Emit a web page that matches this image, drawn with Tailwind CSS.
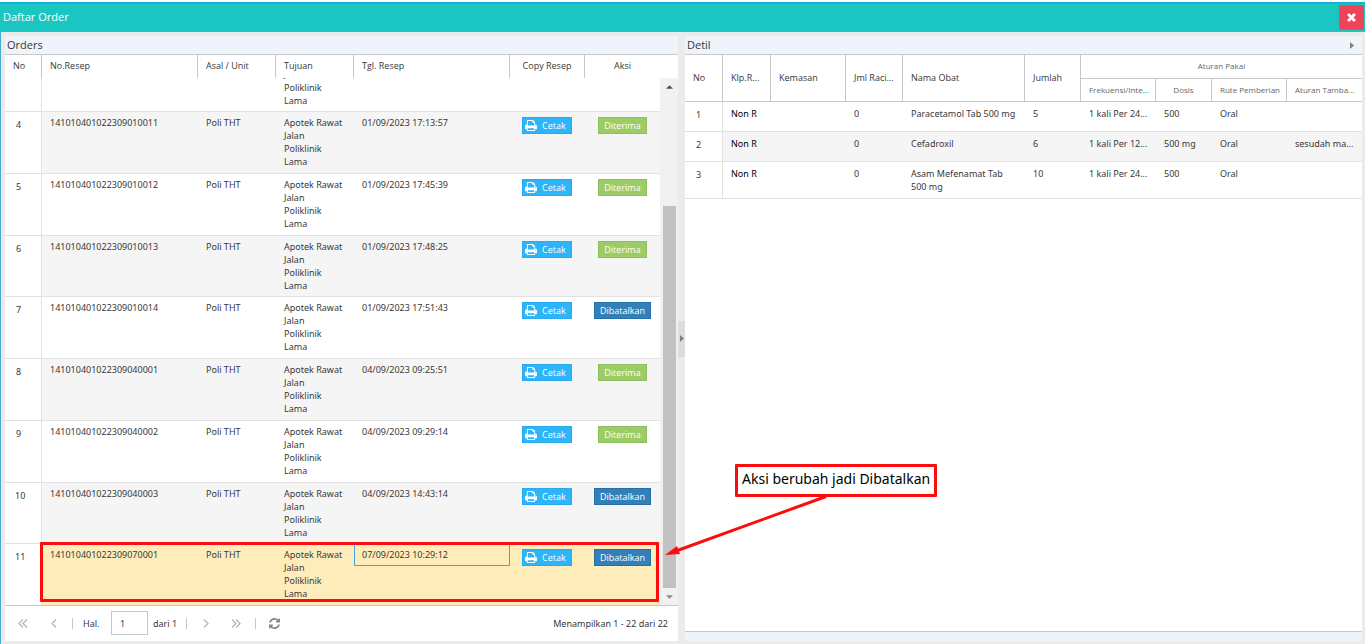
<!DOCTYPE html>
<html lang="id">
<head>
<meta charset="utf-8">
<title>Daftar Order</title>
<script src="https://cdn.jsdelivr.net/npm/@tailwindcss/browser@4"></script>
</head>
<body class="relative flex h-screen flex-col overflow-hidden bg-[#ebebeb] pt-[2px] font-['Open_Sans',sans-serif] text-[9px] leading-[13px] text-[#383838] before:absolute before:inset-x-0 before:top-0 before:h-[2px] before:bg-white">
<header class="flex h-[30px] shrink-0 items-center justify-between border-t-2 border-[#14b0d8] bg-[#19c6c1] pb-[2px] pl-[3px] pr-px text-white">
  <h1 class="text-[11px] leading-4">Daftar Order</h1>
  <button aria-label="Tutup" class="flex h-[25px] w-[25px] items-center justify-center border border-[#d9535f] bg-[#ee4358]">
    <svg class="h-[9px] w-[9px]" viewBox="0 0 10 10" stroke="#fff" stroke-width="3.2"><path d="M1.2 1.2 8.8 8.8M8.8 1.2 1.2 8.8"/></svg>
  </button>
</header>
<main class="grid min-h-0 flex-1 grid-cols-[673fr_7px_677fr] border-l border-[#45aed0] pb-[3px] pl-1 pr-[3px] pt-1">
  <section class="flex min-h-0 min-w-0 flex-col bg-white">
    <h2 class="h-[19px] shrink-0 border-b border-[#c6c8cc] bg-[#eff3fa] pl-[2px] text-[11px] leading-[18px]">Orders</h2>
    <table class="w-full shrink-0 table-fixed border-separate border-spacing-0 text-left">
      <colgroup><col class="w-[37px]"><col><col class="w-[78px]"><col class="w-[78px]"><col class="w-[156px]"><col class="w-[75px]"><col class="w-[93px]"></colgroup>
      <thead><tr class="h-[23px] *:border-r *:border-[#c6c8cc] *:px-2 *:pb-[2px] *:font-normal">
        <th>No</th><th>No.Resep</th><th>Asal / Unit</th><th>Tujuan</th><th>Tgl. Resep</th><th class="text-center">Copy Resep</th><th class="border-r-0! pr-[26px]! text-center">Aksi</th>
      </tr></thead>
    </table>
    <div class="flex min-h-0 flex-1">
      <div class="relative flex min-w-0 flex-1 flex-col justify-end overflow-hidden">
        <table class="w-full shrink-0 table-fixed border-separate border-spacing-0 font-['Noto_Sans',sans-serif]">
          <colgroup><col class="w-[37px]"><col><col class="w-[78px]"><col class="w-[78px]"><col class="w-[156px]"><col class="w-[75px]"><col class="w-[75px]"></colgroup>
          <tbody id="orders"></tbody>
        </table>
        <div class="absolute bottom-[3px] left-[35px] right-px h-[60px] rounded-[1px] border-3 border-[#fb0d0d]"></div>
      </div>
      <div class="flex w-[18px] flex-col items-center bg-[#f1f1f1]">
        <div class="flex h-[18px] items-center"><svg class="h-1 w-[7px]" viewBox="0 0 8 4" fill="#505050"><path d="M0 4 4 0l4 4z"/></svg></div>
        <div class="mt-[110px] mb-0 w-[13px] flex-1 bg-[#c1c1c1]"></div>
        <div class="flex h-[17px] items-center"><svg class="h-1 w-[7px]" viewBox="0 0 8 4" fill="#8a8a8a"><path d="M0 0h8L4 4z"/></svg></div>
      </div>
    </div>
    <footer class="flex h-9 shrink-0 items-center border-t border-[#c6c8cc] pl-[13px] pr-[10px] pb-px font-['Noto_Sans',sans-serif]">
      <button aria-label="Halaman pertama" class="w-[31px]"><svg class="h-[9px] w-[10px]" viewBox="0 0 10 9" fill="none" stroke="#b4b4b4" stroke-width="1.2"><path d="M5 .5 1 4.5l4 4M9 .5 5 4.5l4 4"/></svg></button>
      <button aria-label="Halaman sebelumnya" class="w-[23px]"><svg class="h-[9px] w-[10px]" viewBox="0 0 10 9" fill="none" stroke="#b4b4b4" stroke-width="1.2"><path d="M7 .5 3 4.5l4 4"/></svg></button>
      <span class="h-[11px] w-px bg-[#c8c8c8]"></span>
      <label for="page" class="ml-[10px] w-[28px]">Hal.</label>
      <input id="page" value="1" class="h-6 w-[37px] border border-[#c8c8c8] pl-2">
      <span class="ml-[5px] w-[33px] whitespace-nowrap">dari 1</span>
      <span class="h-[11px] w-px bg-[#c8c8c8]"></span>
      <button aria-label="Halaman berikutnya" class="ml-[14px] w-[30px]"><svg class="h-[9px] w-[10px]" viewBox="0 0 10 9" fill="none" stroke="#b4b4b4" stroke-width="1.2"><path d="m3 .5 4 4-4 4"/></svg></button>
      <button aria-label="Halaman terakhir" class="w-[24px]"><svg class="h-[9px] w-[10px]" viewBox="0 0 10 9" fill="none" stroke="#b4b4b4" stroke-width="1.2"><path d="m1 .5 4 4-4 4M5 .5l4 4-4 4"/></svg></button>
      <span class="h-[11px] w-px bg-[#c8c8c8]"></span>
      <button aria-label="Muat ulang" class="ml-[13px]"><svg class="h-[11px] w-[11px]" viewBox="0 0 1536 1536" fill="#858585"><path d="M1511 928q0 5-1 7-64 268-268 434.500T764 1536q-146 0-282.500-55T238 1324l-129 129q-19 19-45 19t-45-19-19-45V960q0-26 19-45t45-19h448q26 0 45 19t19 45-19 45l-137 137q71 66 161 102t187 36q134 0 250-65t186-179q11-17 53-117 8-23 30-23h192q13 0 22.500 9.500t9.500 22.500zm25-800v448q0 26-19 45t-45 19h-448q-26 0-45-19t-19-45 19-45l138-138Q969 256 768 256q-134 0-250 65T332 500q-11 17-53 117-8 23-30 23H50q-13 0-22.500-9.500T18 608v-7q65-268 270-434.500T768 0q146 0 284 55.500T1297 212l130-129q19-19 45-19t45 19 19 45z"/></svg></button>
      <span class="ml-auto">Menampilkan 1 - 22 dari 22</span>
    </footer>
  </section>
  <div class="flex items-center">
    <button aria-label="Ciutkan panel detil" class="flex h-9 w-full items-center justify-center bg-[#dcdcdc]"><svg class="h-[7px] w-1" viewBox="0 0 4 7" fill="#808080"><path d="M0 0v7l4-3.500z"/></svg></button>
  </div>
  <section class="flex min-h-0 min-w-0 flex-col bg-white">
    <div class="flex h-[19px] shrink-0 items-center justify-between border-b border-[#c6c8cc] bg-[#eff3fa] pl-[2px] pr-2">
      <h2 class="text-[11px] leading-[18px]">Detil</h2>
      <button aria-label="Ciutkan"><svg class="h-[7px] w-1" viewBox="0 0 4 7" fill="#808080"><path d="M0 0v7l4-3.500z"/></svg></button>
    </div>
    <table class="w-full table-fixed border-separate border-spacing-0 text-left">
      <colgroup><col class="w-[38px]"><col class="w-[48px]"><col class="w-[75px]"><col class="w-[57px]"><col><col class="w-[56px]"><col class="w-[75px]"><col class="w-[56px]"><col class="w-[75px]"><col class="w-[75px]"></colgroup>
      <thead class="*:*:border-r *:*:border-b *:*:border-[#c6c8cc] *:*:px-2 *:*:pb-[2px] *:*:font-normal *:*:whitespace-nowrap">
        <tr class="h-[24px]"><th rowspan="2">No</th><th rowspan="2">Klp.R...</th><th rowspan="2">Kemasan</th><th rowspan="2">Jml Raci...</th><th rowspan="2">Nama Obat</th><th rowspan="2">Jumlah</th><th colspan="4" class="border-r-0! text-center text-[8px] text-[#666]">Aturan Pakai</th></tr>
        <tr class="h-[23px] text-[8px] text-[#666]"><th>Frekuensi/Inte...</th><th class="text-center">Dosis</th><th class="text-center">Rute Pemberian</th><th class="border-r-0!">Aturan Tamba...</th></tr>
      </thead>
      <tbody id="detail" class="font-['Noto_Sans',sans-serif]"></tbody>
    </table>
    <div class="mt-auto h-[10px] shrink-0 border-t border-[#c6c8cc] bg-[#eff3fa]"></div>
  </section>
</main>
<div class="absolute left-[735px] top-[464px] rounded-[1px] border-3 border-[#fb0d0d] bg-white px-1 pb-[5px] pt-[2px] font-['Noto_Sans',sans-serif] text-[14px] leading-5 text-black">Aksi berubah jadi Dibatalkan</div>
<svg class="pointer-events-none absolute left-[660px] top-[490px] h-[70px] w-[170px]" viewBox="0 0 170 70"><path d="M166 6.500 16 61" stroke="#fb0d0d" stroke-width="3"/><path d="m5 65 12-9 3 8z" fill="#fb0d0d"/></svg>
<script>
const printer = '<svg class="h-[11px] w-[12px]" viewBox="0 0 1664 1536" fill="#fff"><path d="M384 1408h896v-256H384v256zm0-640h896V384h-160q-40 0-68-28t-28-68V128H384v640zm1152 64q0-26-19-45t-45-19-45 19-19 45 19 45 45 19 45-19 19-45zm128 0v416q0 13-9.500 22.500t-22.500 9.500h-224v160q0 40-28 68t-68 28H352q-40 0-68-28t-28-68v-160H32q-13 0-22.500-9.500T0 1248V832q0-79 56.500-135.500T192 640h64V96q0-40 28-68t68-28h672q40 0 88 20t76 48l152 152q28 28 48 76t20 88v256h64q79 0 135.500 56.500T1664 832z"/></svg>';
const unit = 'Apotek Rawat<br>Jalan<br>Poliklinik<br>Lama';
const orders = [
  [4, '141010401022309010011', '01/09/2023 17:13:57', 'Diterima'],
  [5, '141010401022309010012', '01/09/2023 17:45:39', 'Diterima'],
  [6, '141010401022309010013', '01/09/2023 17:48:25', 'Diterima'],
  [7, '141010401022309010014', '01/09/2023 17:51:43', 'Dibatalkan'],
  [8, '141010401022309040001', '04/09/2023 09:25:51', 'Diterima'],
  [9, '141010401022309040002', '04/09/2023 09:29:14', 'Diterima'],
  [10, '141010401022309040003', '04/09/2023 14:43:14', 'Dibatalkan'],
  [11, '141010401022309070001', '07/09/2023 10:29:12', 'Dibatalkan'],
];
// The row above number 4 is scrolled half out of view; only its unit column reaches the visible area.
const scrolledRow = `<tr class="h-[62px] bg-white *:px-2"><td class="border-r border-[#e2e2e2]"></td><td></td><td></td><td class="pb-1 align-bottom">Jalan<br>Poliklinik<br>Lama</td><td></td><td></td><td></td></tr>`;
document.getElementById('orders').innerHTML = scrolledRow + orders.map(([no, resep, tgl, aksi]) => {
  const selected = no === 11;
  const tone = selected ? 'bg-[#feedbb]' : no % 2 ? 'bg-white' : 'bg-[#f5f5f5]';
  const date = selected
    ? `<td class="p-0!"><div class="h-[22px] border border-[#3fa9e8] pl-[7px] pt-[3px]">${tgl}</div></td>`
    : `<td>${tgl}</td>`;
  const action = aksi === 'Diterima' ? 'border-[#8dc05c] bg-[#9ccc65]' : 'border-[#2470a8] bg-[#337fb8]';
  return `<tr class="h-[62px] nth-[4n]:h-[61px] ${tone} *:border-t *:border-[#e2e2e2] *:px-2 *:pt-1 *:align-top">
    <td class="border-r bg-white pt-[6px]! ${no > 9 ? 'pl-[10px]!' : 'pl-[11px]!'} ">${no}</td><td>${resep}</td><td>Poli THT</td>
    <td class="pr-0!">${unit}</td>${date}
    <td class="pl-3! pt-[5px]!"><button class="flex h-[17px] w-[50px] items-center gap-[5px] border border-[#2aa9ee] bg-[#2db5f9] pl-[2px] font-['Open_Sans',sans-serif] text-white">${printer}Cetak</button></td>
    <td class="px-0! pt-[5px]! text-center"><button class="h-[17px] border px-[5px] font-['Open_Sans',sans-serif] leading-[14px] text-white ${action}">${aksi}</button></td></tr>`;
}).join('');
const detail = [
  ['1', 'Non R', '', '0', 'Paracetamol Tab 500 mg', '5', '1 kali Per 24...', '500', 'Oral', ''],
  ['2', 'Non R', '', '0', 'Cefadroxil', '6', '1 kali Per 12...', '500 mg', 'Oral', 'sesudah ma...'],
  ['3', 'Non R', '', '0', 'Asam Mefenamat Tab 500&nbsp;mg', '10', '1 kali Per 24...', '500', 'Oral', ''],
];
document.getElementById('detail').innerHTML = detail.map(r =>
  `<tr class="h-[30px] even:bg-[#f5f5f5] *:border-b *:border-[#e2e2e2] *:pl-2 *:pr-1 *:pt-[5px] *:pb-[5px] *:align-top *:first:border-r *:first:bg-white *:first:pl-[11px] *:first:pt-[6px] *:nth-[7]:whitespace-nowrap *:nth-[10]:whitespace-nowrap *:nth-[2]:text-black">${r.map(c => `<td>${c}</td>`).join('')}</tr>`
).join('');
</script>
</body>
</html>
